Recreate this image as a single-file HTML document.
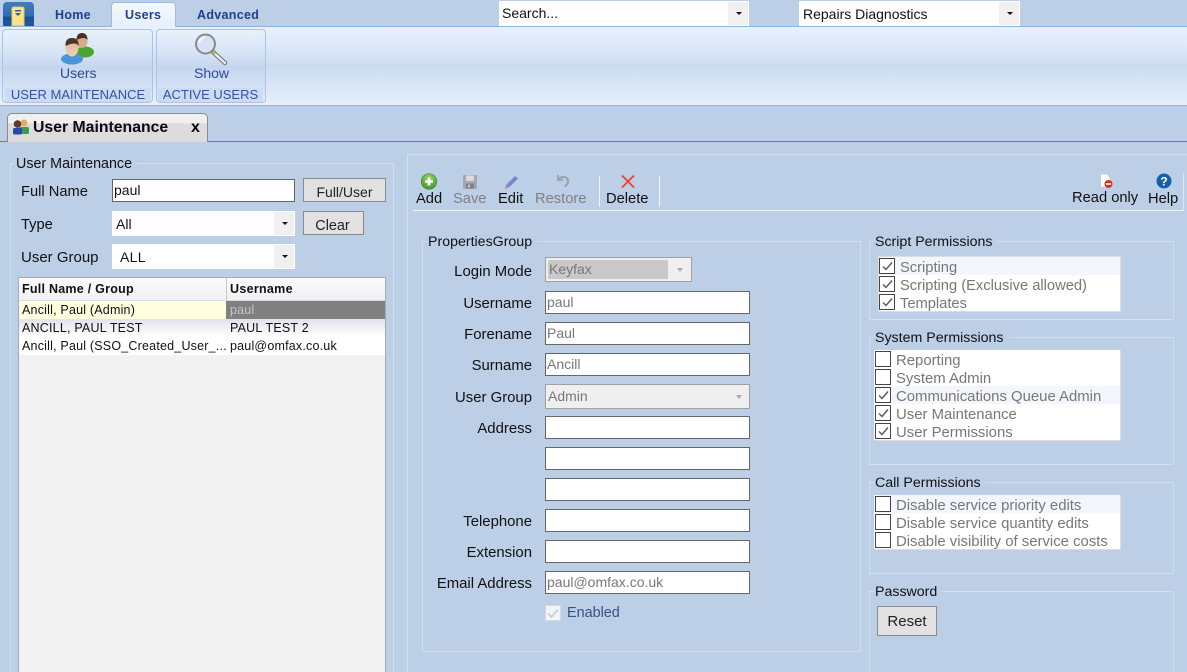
<!DOCTYPE html>
<html><head><meta charset="utf-8"><style>
html,body{margin:0;padding:0;width:1187px;height:672px;overflow:hidden}
body{position:relative;background:#bccfe6;font-family:"Liberation Sans",Arial,sans-serif;font-size:14.4px;color:#111}
#root{left:0;top:0;width:1187px;height:672px;overflow:hidden;background:#bccfe6}
div,span,svg{position:absolute;box-sizing:border-box}
.t{white-space:nowrap;line-height:18px;height:18px}
.r{text-align:right;width:132px;left:400px;font-size:14.9px}
.in{left:545px;width:205px;height:23px;background:#fff;border:1px solid #666;color:#777;padding-left:1px;line-height:21px;font-size:14px}
.fs{border:1px solid #d3deed}
.lg{background:#bccfe6;padding:0 5px 0 1px;line-height:16px;height:16px;white-space:nowrap;font-size:14.2px;color:#111}
.btn{background:#e1e1e1;border:1px solid #8a8a8a;text-align:center;color:#222;overflow:hidden}
.sel{background:#fff}
.arr{right:1px;top:1px;bottom:1px;width:20px;background:#f0f0f0}
.arr:after{content:"";position:absolute;left:8px;top:10px;border:3px solid transparent;border-top:3px solid #111;border-bottom:0}
.list{background:#fff;left:874px;width:247px;border:1px solid #ddd}
.row{left:0;right:0;height:18px;overflow:hidden;color:#777;font-size:14.9px;line-height:22px;padding-left:22px;white-space:nowrap}
.cb{width:16px;height:16px;border:1px solid #444;background:#fff}
.tb{font-size:14.7px;line-height:18px;white-space:nowrap;top:190px;height:18px}
.g{font-size:12.5px;letter-spacing:.2px;line-height:18px;height:18px;white-space:nowrap;color:#111}
.rt{font-weight:bold;color:#1f3f8f;font-size:12.5px;letter-spacing:.3px;line-height:16px;top:7px;white-space:nowrap}
.cap{top:88px;height:14px;background:#c9dcf2;color:#3c4ea0;font-size:13px;line-height:14px;text-align:center;white-space:nowrap}
.rb{top:29px;height:74px;border:1px solid #aac4e6;border-radius:4px;background:linear-gradient(#e8f1fc 0%,#d8e5f7 30%,#c4d6ee 52%,#d8e5f7 85%,#e0ebfa 100%)}
</style></head><body><div id="root">

<!-- top strip -->
<div style="left:0;top:26px;width:1187px;height:80px;background:linear-gradient(#e8f1fc 0%,#dde9f9 25%,#cbdbf0 50%,#dce8f8 80%,#e6f0fc 100%);border-top:1px solid #8fb3df;border-bottom:1px solid #8fb3df"></div>

<!-- app button -->
<div style="left:3px;top:2px;width:31px;height:24px;border-radius:4px 4px 0 0;background:linear-gradient(#3f7cc0 0,#2f6cb0 60%,#1a4f92 62%,#1f5ba0 100%)"></div>
<svg style="left:11px;top:6px" width="14" height="20" viewBox="0 0 14 20"><path d="M1 3Q1 1 3 1H11Q13 1 13 3V19.500H1Z" fill="#fbe38a" stroke="#e8c860"/><rect x="4" y="4" width="6" height="1.500" fill="#3060a0"/><path d="M4 7H10L7 10Z" fill="#3060a0"/></svg>

<!-- ribbon tabs -->
<div class="rt" style="left:55px">Home</div>
<div style="left:111px;top:2px;width:65px;height:25px;border:1px solid #9cbce4;border-bottom:0;border-radius:4px 4px 0 0;background:linear-gradient(#f4f8fe,#e6f0fc)"></div>
<div class="rt" style="left:125px">Users</div>
<div class="rt" style="left:197px">Advanced</div>

<!-- top selects -->
<div class="sel" style="left:499px;top:1px;width:250px;height:25px"><span class="t" style="left:3px;top:3px;font-size:14px">Search...</span><div class="arr"></div></div>
<div class="sel" style="left:799px;top:1px;width:221px;height:25px"><span class="t" style="left:4px;top:4px;font-size:14px">Repairs Diagnostics</span><div class="arr"></div></div>

<!-- ribbon groups -->
<div class="rb" style="left:2px;width:151px"></div>
<div class="cap" style="left:5px;width:146px">USER MAINTENANCE</div>
<div class="t" style="left:60px;top:64px;color:#2c4a96;font-size:14px">Users</div>
<svg style="left:58px;top:31px" width="38" height="36" viewBox="0 0 38 36">
<defs><linearGradient id="fc" x1="0" y1="0" x2="0" y2="1"><stop offset="0" stop-color="#e0b090"/><stop offset="1" stop-color="#f0d0b8"/></linearGradient></defs>
<ellipse cx="27" cy="21" rx="9" ry="5.500" fill="#4aa52e"/><ellipse cx="24" cy="10" rx="5.500" ry="7" fill="#d9a888"/><path d="M18.500 9Q18.500 2 24 2Q29.500 2 29.500 9Q27 5 18.500 9Z" fill="#4a3020"/>
<ellipse cx="14" cy="28" rx="11" ry="5.500" fill="#4a95d8"/><ellipse cx="14" cy="16.500" rx="6.500" ry="9" fill="url(#fc)"/><path d="M7.500 15Q7 7 14 7Q21 7 20.500 15Q18 10 7.500 15Z" fill="#4a3428"/></svg>

<div class="rb" style="left:156px;width:110px"></div>
<div class="cap" style="left:158px;width:105px">ACTIVE USERS</div>
<div class="t" style="left:194px;top:64px;color:#2c4a96;font-size:14px">Show</div>
<svg style="left:193px;top:32px" width="36" height="34" viewBox="0 0 36 34"><path d="M20 20L32 31" stroke="#777" stroke-width="4.500" stroke-linecap="round"/><path d="M21 21L32 31" stroke="#eee" stroke-width="2.200" stroke-linecap="round"/><path d="M19.500 19.500L22 22" stroke="#9ad040" stroke-width="2.500"/><circle cx="12.500" cy="12" r="9.500" fill="#d8e2f6" stroke="#8a8a8a" stroke-width="2"/><path d="M6 11Q7 6 12 5" stroke="#fff" stroke-width="1.500" fill="none"/></svg>

<!-- document tab -->
<div style="left:0;top:141px;width:1187px;height:1px;background:#7a7a7a"></div>
<div style="left:7px;top:113px;width:201px;height:29px;border:1px solid #8a8a8a;border-bottom:0;border-radius:5px 5px 0 0;background:linear-gradient(#f0f0f0 0,#f0f0f0 32%,#dcdcdc 34%,#dcdcdc 100%)"></div>
<svg style="left:12px;top:119px" width="18" height="16" viewBox="0 0 18 16"><circle cx="12" cy="4" r="3.500" fill="#e8a860"/><rect x="7" y="8" width="10" height="7" rx="1.500" fill="#3d9a50"/><circle cx="5.500" cy="5" r="3.800" fill="#5a3a2a"/><rect x="1" y="9" width="9" height="6.500" rx="1.500" fill="#2a48a8"/></svg>
<div class="t" style="left:33px;top:119px;font-size:15.8px;font-weight:bold;color:#0a0a14">User Maintenance</div>
<div class="t" style="left:191px;top:119px;font-size:16px;font-weight:bold;color:#000">x</div>

<!-- left fieldset -->
<div class="fs" style="left:10px;top:163px;width:384px;height:509px;border-bottom:0"></div>
<div class="lg" style="left:15px;top:156px;font-size:14.3px">User Maintenance</div>
<div class="t" style="left:21px;top:183px;font-size:14.7px">Full Name</div>
<div class="in" style="left:112px;top:179px;width:183px;color:#111;font-size:14px">paul</div>
<div class="btn" style="left:303px;top:178px;width:83px;height:24px;line-height:27px;font-size:14px">Full/User</div>
<div class="t" style="left:21px;top:216px;font-size:14.7px">Type</div>
<div class="sel" style="left:112px;top:211px;width:183px;height:25px"><span class="t" style="left:4px;top:4px;font-size:14px">All</span><div class="arr"></div></div>
<div class="btn" style="left:303px;top:211px;width:61px;height:24px;line-height:28px;font-size:14.4px;padding-right:2px">Clear</div>
<div style="left:304px;top:230px;width:59px;height:4px;background:#e1e1e1"></div>
<div class="t" style="left:21px;top:249px;font-size:15px">User Group</div>
<div class="sel" style="left:112px;top:244px;width:183px;height:25px"><span class="t" style="left:8px;top:4px;font-size:14px;letter-spacing:.3px">ALL</span><div class="arr"></div></div>

<!-- grid -->
<div style="left:18px;top:277px;width:368px;height:395px;background:#f2f2f2;border:1px solid #a2aabc;border-bottom:0"></div>
<div style="left:19px;top:278px;width:366px;height:23px;background:linear-gradient(#fbfbfb,#f0f1f4);border-bottom:1px solid #d8dce4"></div>
<div style="left:226px;top:278px;width:1px;height:23px;background:#c4cad6"></div>
<div class="g" style="left:22px;top:280px;font-weight:bold;letter-spacing:.25px">Full Name / Group</div>
<div class="g" style="left:230px;top:280px;font-weight:bold;letter-spacing:.3px">Username</div>
<div style="left:19px;top:301px;width:207px;height:18px;background:#ffffe0"></div>
<div style="left:226px;top:301px;width:159px;height:18px;background:#808080"></div>
<div style="left:19px;top:319px;width:366px;height:18px;background:linear-gradient(#e2e2ea,#fff)"></div>
<div style="left:19px;top:337px;width:366px;height:18px;background:#fff"></div>
<div class="g" style="left:22px;top:301px">Ancill, Paul (Admin)</div>
<div class="g" style="left:230px;top:301px;color:#c4c4c4">paul</div>
<div class="g" style="left:22px;top:319px">ANCILL, PAUL TEST</div>
<div class="g" style="left:230px;top:319px">PAUL TEST 2</div>
<div class="g" style="left:22px;top:337px">Ancill, Paul (SSO_Created_User_...</div>
<div class="g" style="left:230px;top:337px">paul@omfax.co.uk</div>

<!-- right panel -->
<div style="left:407px;top:154px;width:780px;height:518px;border:1px solid #d3deed;border-width:1px 0 0 1px"></div>

<!-- toolbar -->
<div style="left:413px;top:210px;width:771px;height:1px;background:#f0f4fa"></div>
<div style="left:1183px;top:173px;width:1px;height:38px;background:#dde6f2"></div>
<div style="left:599px;top:176px;width:1px;height:31px;background:#eef3f9"></div>
<div style="left:659px;top:176px;width:1px;height:31px;background:#eef3f9"></div>
<svg style="left:420px;top:173px" width="18" height="18" viewBox="0 0 18 18"><defs><radialGradient id="gg" cx=".5" cy=".3" r=".8"><stop offset="0" stop-color="#9ad870"/><stop offset="1" stop-color="#2e8a20"/></radialGradient></defs><circle cx="9" cy="8.500" r="7.800" fill="url(#gg)" stroke="#3a8a2a" stroke-width=".6"/><path d="M9 4.500V12.500M5 8.500H13" stroke="#fff" stroke-width="2.600"/></svg>
<svg style="left:462px;top:174px" width="16" height="16" viewBox="0 0 16 16"><rect x="1" y="1" width="14" height="14" rx="1" fill="#a4a8ae"/><rect x="4" y="1.500" width="8" height="5.500" fill="#d8dade"/><rect x="4" y="9.500" width="8" height="5" fill="#7e8288"/><rect x="6" y="10.500" width="2" height="3" fill="#c4c8cc"/></svg>
<svg style="left:503px;top:174px" width="16" height="16" viewBox="0 0 16 16"><path d="M3 11L12 2L15 4.500L6 13.500Z" fill="#7a88c8"/><path d="M3 11L6 13.500L1.500 15Z" fill="#c88a70"/></svg>
<svg style="left:555px;top:173px" width="16" height="16" viewBox="0 0 16 16"><path d="M3 2V7H8" fill="none" stroke="#9aa2ac" stroke-width="1.800"/><path d="M3.500 6.500Q6 3.500 9.500 4Q13.500 5 13 9Q12.500 12 9.500 13.500" fill="none" stroke="#9aa2ac" stroke-width="2"/></svg>
<svg style="left:620px;top:174px" width="16" height="15" viewBox="0 0 16 15"><path d="M2 1.500L14 13.500M14 1.500L2 13.500" stroke="#f04028" stroke-width="1.800"/></svg>
<div class="tb" style="left:416px">Add</div>
<div class="tb" style="left:453px;color:#808080">Save</div>
<div class="tb" style="left:498px">Edit</div>
<div class="tb" style="left:535px;color:#808080">Restore</div>
<div class="tb" style="left:606px">Delete</div>
<svg style="left:1099px;top:173px" width="16" height="16" viewBox="0 0 16 16"><path d="M1.500 1H8L11 4V14H1.500Z" fill="#fff" stroke="#c8ccd4"/><circle cx="9.500" cy="11" r="4" fill="#d83020"/><rect x="7" y="10.200" width="5" height="1.600" fill="#fff"/></svg>
<svg style="left:1156px;top:173px" width="16" height="16" viewBox="0 0 16 16"><circle cx="8" cy="8" r="7.500" fill="#1560a8"/><text x="8" y="12.500" text-anchor="middle" font-family="Liberation Sans" font-weight="bold" font-size="12" fill="#fff">?</text></svg>
<div class="tb" style="left:1072px;top:189px">Read only</div>
<div class="tb" style="left:1148px">Help</div>

<!-- properties group -->
<div class="fs" style="left:422px;top:241px;width:439px;height:411px"></div>
<div class="lg" style="left:427px;top:234px">PropertiesGroup</div>
<div class="t r" style="top:263px">Login Mode</div>
<div style="left:545px;top:257px;width:147px;height:25px;background:#efefef;border:1px solid #a0a0a0"><div style="left:2px;top:2px;width:120px;height:19px;background:#c9c9c9;color:#777;line-height:19px;font-size:14px;padding-left:1px">Keyfax</div><span style="left:131px;top:10px;border:3.500px solid transparent;border-top:4px solid #aaa;border-bottom:0"></span></div>
<div class="t r" style="top:295px">Username</div>
<div class="in" style="top:291px">paul</div>
<div class="t r" style="top:326px">Forename</div>
<div class="in" style="top:322px">Paul</div>
<div class="t r" style="top:357px">Surname</div>
<div class="in" style="top:353px">Ancill</div>
<div class="t r" style="top:389px">User Group</div>
<div style="left:545px;top:384px;width:205px;height:25px;background:#efefef;border:1px solid #a0a0a0;color:#777;line-height:23px;padding-left:2px;font-size:14px">Admin<span style="left:190px;top:10px;border:3.500px solid transparent;border-top:4px solid #aaa;border-bottom:0"></span></div>
<div class="t r" style="top:420px">Address</div>
<div class="in" style="top:416px"></div>
<div class="in" style="top:447px"></div>
<div class="in" style="top:478px"></div>
<div class="t r" style="top:513px">Telephone</div>
<div class="in" style="top:509px"></div>
<div class="t r" style="top:544px">Extension</div>
<div class="in" style="top:540px"></div>
<div class="t r" style="top:575px">Email Address</div>
<div class="in" style="top:571px">paul@omfax.co.uk</div>
<div style="left:545px;top:605px;width:16px;height:16px;background:#f2f4f8;border:1px solid #d4d8e0"></div>
<svg style="left:546px;top:606px" width="14" height="14" viewBox="0 0 14 14"><path d="M2 7.500L5.500 11L12 3.500" fill="none" stroke="#c8ccd0" stroke-width="1.600"/></svg>
<div class="t" style="left:567px;top:604px;color:#3a5080;font-size:14.4px">Enabled</div>

<!-- script permissions -->
<div class="fs" style="left:869px;top:241px;width:305px;height:79px"></div>
<div class="lg" style="left:874px;top:234px">Script Permissions</div>
<div class="list" style="left:878px;top:256px;width:243px;height:56px">
<div class="row" style="top:0;background:#f3f6fc;padding-left:21px;font-size:14.7px;line-height:23px">Scripting</div><div class="row" style="top:18px;padding-left:21px;font-size:14.7px;line-height:23px">Scripting (Exclusive allowed)</div><div class="row" style="top:36px;padding-left:21px;font-size:14.7px;line-height:23px">Templates</div>
<div class="cb" style="left:0;top:1px"></div><div class="cb" style="left:0;top:19px"></div><div class="cb" style="left:0;top:37px"></div>
<svg style="left:1px;top:2px" width="14" height="52" viewBox="0 0 14 52" fill="none" stroke="#555" stroke-width="1.400"><path d="M3 7.500L6 10.500L12 3.500M3 25.500L6 28.500L12 21.500M3 43.500L6 46.500L12 39.500"/></svg>
</div>

<!-- system permissions -->
<div class="fs" style="left:869px;top:337px;width:305px;height:128px"></div>
<div class="lg" style="left:874px;top:330px">System Permissions</div>
<div class="list" style="top:350px;height:91px;border-width:0 1px 1px 0">
<div class="row" style="top:0">Reporting</div><div class="row" style="top:18px">System Admin</div><div class="row" style="top:36px;background:#f3f6fc">Communications Queue Admin</div><div class="row" style="top:54px">User Maintenance</div><div class="row" style="top:72px">User Permissions</div>
<div class="cb" style="left:1px;top:1px"></div><div class="cb" style="left:1px;top:19px"></div><div class="cb" style="left:1px;top:37px"></div><div class="cb" style="left:1px;top:55px"></div><div class="cb" style="left:1px;top:73px"></div>
<svg style="left:2px;top:38px" width="14" height="52" viewBox="0 0 14 52" fill="none" stroke="#555" stroke-width="1.400"><path d="M3 7.500L6 10.500L12 3.500M3 25.500L6 28.500L12 21.500M3 43.500L6 46.500L12 39.500"/></svg>
</div>

<!-- call permissions -->
<div class="fs" style="left:869px;top:482px;width:305px;height:92px"></div>
<div class="lg" style="left:874px;top:475px">Call Permissions</div>
<div class="list" style="top:495px;height:55px;border-width:0 1px 1px 0">
<div class="row" style="top:0;background:#f3f6fc">Disable service priority edits</div><div class="row" style="top:18px">Disable service quantity edits</div><div class="row" style="top:36px">Disable visibility of service costs</div>
<div class="cb" style="left:1px;top:1px"></div><div class="cb" style="left:1px;top:19px"></div><div class="cb" style="left:1px;top:37px"></div>
</div>

<!-- password -->
<div class="fs" style="left:869px;top:591px;width:305px;height:81px;border-bottom:0"></div>
<div class="lg" style="left:874px;top:584px">Password</div>
<div class="btn" style="left:877px;top:606px;width:60px;height:30px;line-height:29px;font-size:15px">Reset</div>

</div></body></html>
